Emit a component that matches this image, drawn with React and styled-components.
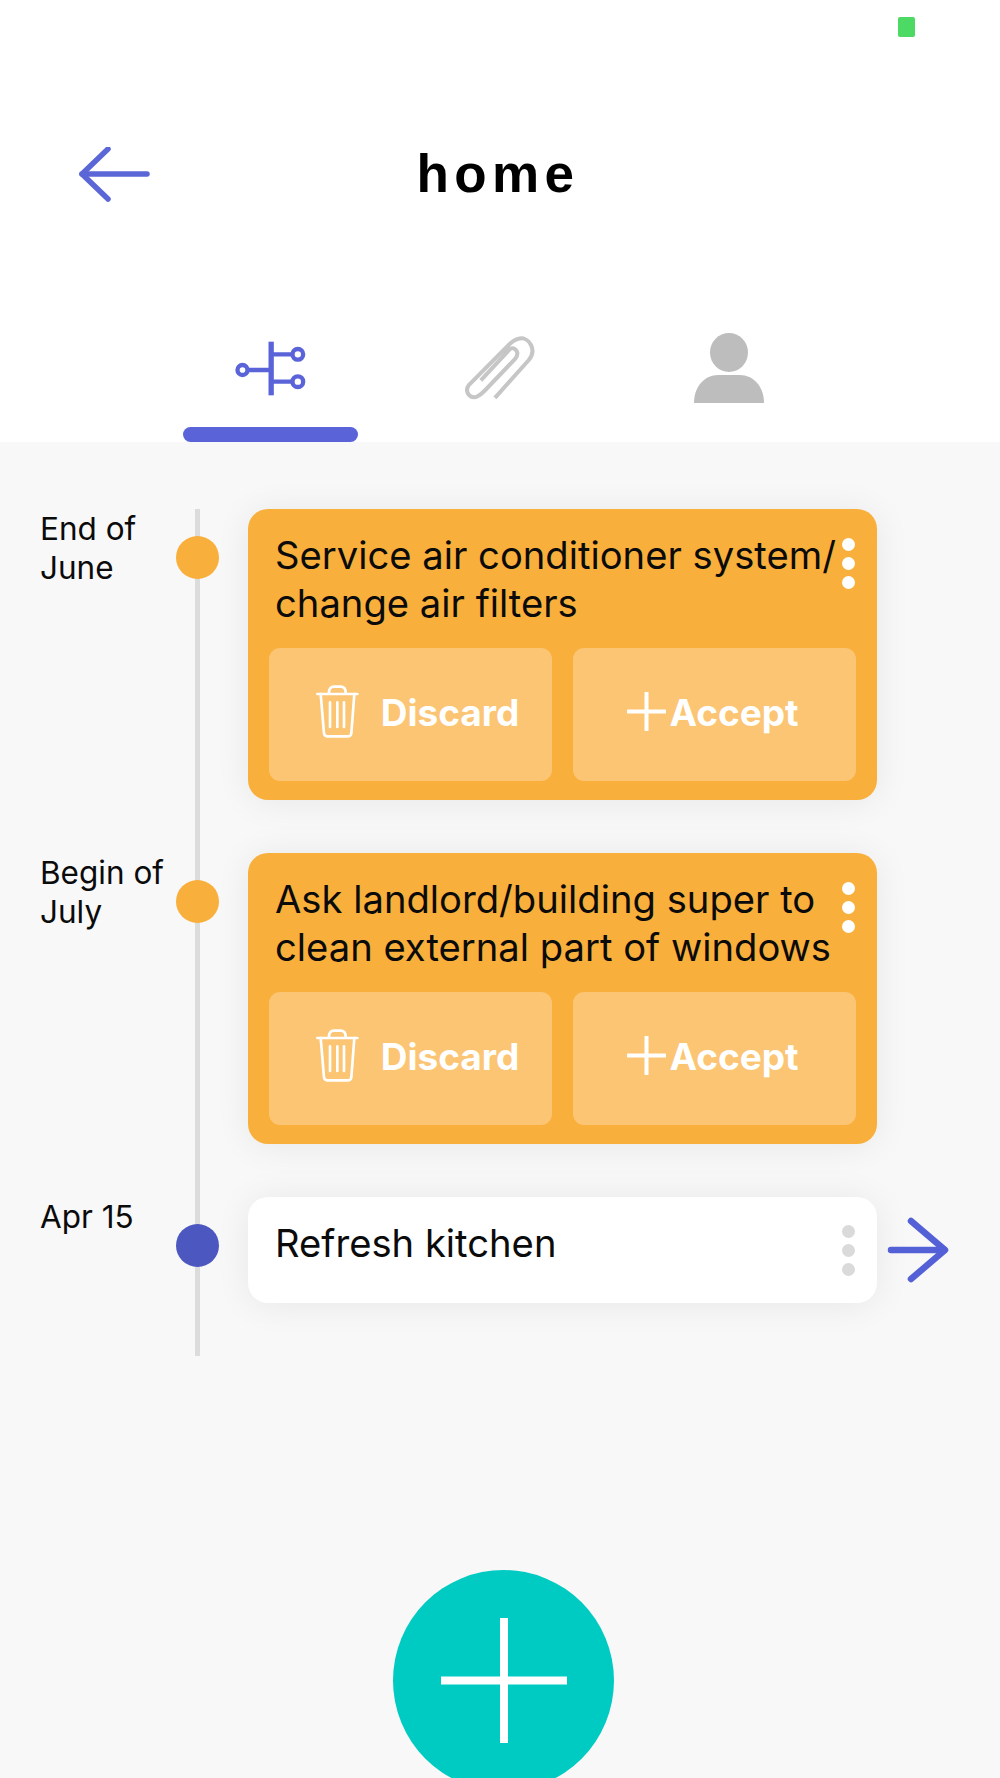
import React from "react";
import styled, { createGlobalStyle } from "styled-components";

const GlobalStyle = createGlobalStyle`
  html, body { margin: 0; padding: 0; background: #f8f8f8; }
  * { box-sizing: border-box; }
`;

const Page = styled.div`
  width: 1000px;
  height: 1778px;
  overflow: hidden;
  display: flex;
  flex-direction: column;
  font-family: Inter, "Noto Sans", sans-serif;
  color: #0b0b0b;
`;

const Header = styled.header`
  height: 442px;
  flex-shrink: 0;
  background: #fff;
  display: flex;
  flex-direction: column;
`;

const StatusBar = styled.div`
  height: 37px;
  padding: 17px 85px 0 0;
  display: flex;
  justify-content: flex-end;
`;

const Battery = styled.span`
  width: 17px;
  height: 20px;
  border-radius: 2px;
  background: #4cd964;
`;

const TitleRow = styled.div`
  margin-top: 110px;
  height: 53px;
  display: grid;
  grid-template-columns: 1fr auto 1fr;
  align-items: center;
`;

const BackButton = styled.div`
  padding-left: 79px;
  display: flex;
`;

const Title = styled.h1`
  margin: -3px 4px 0 0;
  font-family: "Liberation Sans", Arial, sans-serif;
  font-size: 53px;
  line-height: 53px;
  font-weight: 700;
  letter-spacing: 5.4px;
  color: #000;
`;

const Tabs = styled.nav`
  margin-top: 115px;
  flex: 1;
  display: flex;
  justify-content: center;
`;

const Tab = styled.div`
  width: 229px;
  display: flex;
  flex-direction: column;
  align-items: center;
`;

const TabIcon = styled.div`
  height: 112px;
  padding-bottom: 6px;
  display: flex;
  align-items: center;
`;

const TabIndicator = styled.span`
  width: 175px;
  height: 15px;
  margin-left: -2px;
  border-radius: 8px;
  background: #5a64d8;
`;

const Body = styled.main`
  flex: 1;
  padding-top: 67px;
  background: #f8f8f8;
  display: flex;
  flex-direction: column;
`;

const Row = styled.section`
  display: grid;
  grid-template-columns: 135px 43px 659px 1fr;
  padding-left: 40px;
`;

const DateLabel = styled.div`
  font-size: 31.5px;
  line-height: 39px;
  white-space: pre-line;
`;

const Marker = styled.div`
  margin-left: 1px;
  margin-right: -1px;
  background: linear-gradient(#dcdcdc, #dcdcdc) center top / 5px 100% no-repeat;
`;

const Dot = styled.span`
  display: block;
  width: 43px;
  height: 43px;
  margin-top: 27px;
  border-radius: 50%;
  background: ${(p) => p.$color};
`;

const CardSlot = styled.div`
  padding: 0 0 53px 30px;
`;

const Card = styled.article`
  border-radius: 20px;
  background: ${(p) => (p.$pending ? "#f9af3b" : "#fff")};
  box-shadow: 0 2px 36px rgba(0, 0, 0, 0.07);
  min-height: 106px;
`;

const CardHead = styled.div`
  display: flex;
  justify-content: space-between;
  padding: 22px 22px 0 27px;
  height: ${(p) => (p.$pending ? "139px" : "auto")};
`;

const CardTitle = styled.h2`
  margin: 0;
  font-size: 38.2px;
  line-height: 48px;
  font-weight: 400;
  white-space: pre-line;
  color: #0b0b0b;
`;

const Kebab = styled.div`
  display: flex;
  flex-direction: column;
  gap: 6px;
  margin-top: ${(p) => (p.$pending ? "7px" : "6px")};
  flex-shrink: 0;
`;

const KebabDot = styled.span`
  width: 13px;
  height: 13px;
  border-radius: 50%;
  background: ${(p) => (p.$pending ? "#fff" : "#dadada")};
`;

const Actions = styled.div`
  display: grid;
  grid-template-columns: 283px 283px;
  column-gap: 21px;
  padding: 0 22px 19px 21px;
`;

const ActionButton = styled.button`
  height: 133px;
  border: 0;
  border-radius: 11px;
  padding: 0 ${(p) => p.$trail || 0}px 4px ${(p) => p.$inset || 0}px;
  background: #fbc574;
  color: #fff;
  font-family: inherit;
  font-size: 37px;
  font-weight: 700;
  display: flex;
  align-items: center;
  justify-content: center;
  gap: ${(p) => p.$gap}px;
`;

const ActionIcon = styled.span`
  display: flex;
  margin-top: -3px;
`;

const ForwardSlot = styled.div`
  padding: 20px 0 0 10px;
`;

const Fab = styled.button`
  width: 221px;
  height: 221px;
  flex-shrink: 0;
  margin: 214px 0 0 393px;
  border: 0;
  padding: 0;
  border-radius: 50%;
  background: #00cbc3;
  display: flex;
  align-items: center;
  justify-content: center;
`;

const BackArrow = () => (
  <svg width="72" height="56" viewBox="0 0 72 56" fill="none" stroke="#5b67d6" strokeWidth="5.5" strokeLinecap="round" strokeLinejoin="round">
    <path d="M68 27H3" />
    <path d="M29 2L3 27l26 25" />
  </svg>
);

const ForwardArrow = () => (
  <svg width="62" height="66" viewBox="0 0 62 66" fill="none" stroke="#5360d6" strokeWidth="6.5" strokeLinecap="round" strokeLinejoin="round">
    <path d="M4 33h53" />
    <path d="M24 4l34 29-34 29" />
  </svg>
);

const BranchIcon = () => (
  <svg width="72" height="55" viewBox="105 60 215 165" fill="none" stroke="#5a64d8" strokeWidth="13">
    <path d="M213 62v161" strokeWidth="16" />
    <path d="M142 147h71M213 100h65M213 182h65" />
    <circle cx="127" cy="147" r="15" />
    <circle cx="293" cy="100" r="16" />
    <circle cx="293" cy="182" r="16" />
  </svg>
);

const ClipIcon = () => (
  <svg width="72" height="64" viewBox="793 50 214 190" fill="none" stroke="#c6c6c6" strokeWidth="12" strokeLinecap="butt" strokeLinejoin="round">
    <path d="M885 234L985 122C1012 90 985 50 955 58C940 61 930 72 920 82L808 195C795 212 805 232 825 232C835 232 845 222 855 212L945 118C960 100 945 80 930 88L843 182" />
  </svg>
);

const PersonIcon = () => (
  <svg width="70" height="70" viewBox="0 0 70 70" fill="#bdbdbd">
    <ellipse cx="35" cy="19.5" rx="19" ry="19.5" />
    <path d="M0 70C0 53 11 42 24 42h22c13 0 24 11 24 28z" />
  </svg>
);

const TrashIcon = () => (
  <svg width="45" height="55" viewBox="80 65 135 165" fill="none" stroke="#fff" strokeWidth="8" strokeLinecap="round" strokeLinejoin="round">
    <path d="M87 95h120" />
    <path d="M122 92c0-12 6-19 15-19h20c9 0 15 7 15 19" />
    <path d="M97 95l10 118c1 6 4 9 9 9h64c5 0 8-3 9-9l9-118" />
    <path d="M125 120v74M147 120v74M167 120v74" />
  </svg>
);

const PlusIcon = () => (
  <svg width="39" height="39" viewBox="0 0 39 39" fill="none" stroke="#fff" strokeWidth="4" strokeLinecap="round">
    <path d="M19.5 1v37M1 19.5h37" />
  </svg>
);

const FabPlus = () => (
  <svg width="126" height="125" viewBox="0 0 126 125" fill="none" stroke="#fff" strokeWidth="8">
    <path d="M63 0v125M0 62.5h126" />
  </svg>
);

const tasks = [
  { when: "End of\nJune", title: "Service air conditioner system/\nchange air filters", pending: true },
  { when: "Begin of\nJuly", title: "Ask landlord/building super to\nclean external part of windows", pending: true },
  { when: "Apr 15", title: "Refresh kitchen", pending: false },
];

export default function App() {
  return (
    <>
      <GlobalStyle />
      <Page>
        <Header>
          <StatusBar>
            <Battery />
          </StatusBar>
          <TitleRow>
            <BackButton>
              <BackArrow />
            </BackButton>
            <Title>home</Title>
          </TitleRow>
          <Tabs>
            <Tab>
              <TabIcon>
                <BranchIcon />
              </TabIcon>
              <TabIndicator />
            </Tab>
            <Tab>
              <TabIcon>
                <ClipIcon />
              </TabIcon>
            </Tab>
            <Tab>
              <TabIcon>
                <PersonIcon />
              </TabIcon>
            </Tab>
          </Tabs>
        </Header>
        <Body>
          {tasks.map((task) => (
            <Row key={task.title}>
              <DateLabel>{task.when}</DateLabel>
              <Marker>
                <Dot $color={task.pending ? "#f9af3b" : "#4c58c0"} />
              </Marker>
              <CardSlot>
                <Card $pending={task.pending}>
                  <CardHead $pending={task.pending}>
                    <CardTitle>{task.title}</CardTitle>
                    <Kebab $pending={task.pending}>
                      <KebabDot $pending={task.pending} />
                      <KebabDot $pending={task.pending} />
                      <KebabDot $pending={task.pending} />
                    </Kebab>
                  </CardHead>
                  {task.pending && (
                    <Actions>
                      <ActionButton $gap={21} $inset={13}>
                        <ActionIcon>
                          <TrashIcon />
                        </ActionIcon>
                        Discard
                      </ActionButton>
                      <ActionButton $gap={3} $trail={3}>
                        <ActionIcon>
                          <PlusIcon />
                        </ActionIcon>
                        Accept
                      </ActionButton>
                    </Actions>
                  )}
                </Card>
              </CardSlot>
              {!task.pending && (
                <ForwardSlot>
                  <ForwardArrow />
                </ForwardSlot>
              )}
            </Row>
          ))}
          <Fab>
            <FabPlus />
          </Fab>
        </Body>
      </Page>
    </>
  );
}
